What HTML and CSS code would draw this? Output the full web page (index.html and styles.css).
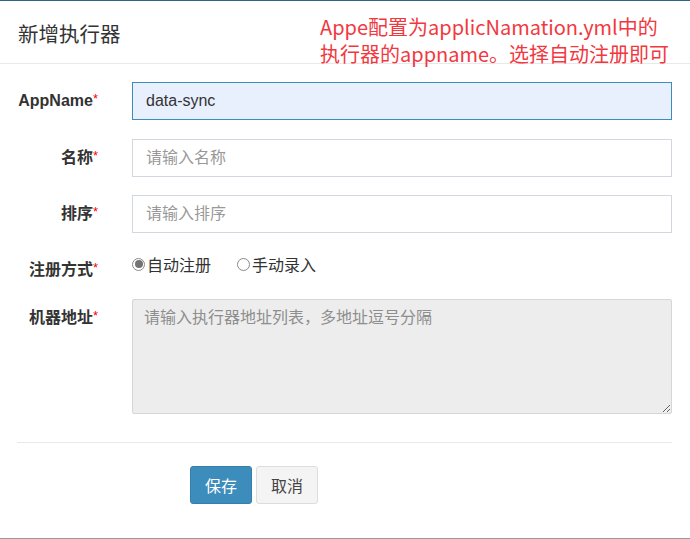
FILE: index.html
```html
<!DOCTYPE html>
<html lang="zh">
<head>
<meta charset="utf-8">
<title>新增执行器</title>
<link rel="stylesheet" href="styles.css">
</head>
<body>
<div class="modal">
  <div class="modal-header">
    <h4 class="modal-title">新增执行器</h4>
    <div class="note">Appe配置为applicNamation.yml中的<br>执行器的appname。选择自动注册即可</div>
  </div>
  <div class="modal-body">
    <div class="form-row first">
      <label class="form-label">AppName<span class="req">*</span></label>
      <input class="form-control focused" type="text" value="data-sync">
    </div>
    <div class="form-row">
      <label class="form-label">名称<span class="req">*</span></label>
      <input class="form-control" type="text" placeholder="请输入名称">
    </div>
    <div class="form-row">
      <label class="form-label">排序<span class="req">*</span></label>
      <input class="form-control" type="text" placeholder="请输入排序">
    </div>
    <div class="form-row radio-row">
      <label class="form-label">注册方式<span class="req">*</span></label>
      <div class="radio-group">
        <label class="radio"><input type="radio" name="mode" checked>自动注册</label>
        <label class="radio"><input type="radio" name="mode">手动录入</label>
      </div>
    </div>
    <div class="form-row">
      <label class="form-label">机器地址<span class="req">*</span></label>
      <textarea class="form-control area" placeholder="请输入执行器地址列表，多地址逗号分隔" readonly></textarea>
    </div>
    <div class="divider"></div>
    <div class="actions">
      <button class="btn btn-primary" type="button">保存</button>
      <button class="btn btn-default" type="button">取消</button>
    </div>
  </div>
</div>
</body>
</html>
```

FILE: styles.css
```css
* { box-sizing: border-box; }
html, body { margin: 0; padding: 0; background: #fff; }
body {
  font-family: "Liberation Sans", "Noto Sans CJK SC", sans-serif;
  color: #333;
  width: 690px;
  height: 539px;
  overflow: hidden;
}
.modal {
  position: relative;
  width: 690px;
  height: 539px;
  border-top: 1px solid #2b6689;
  border-bottom: 1px solid #9a9a9a;
}
.modal-header {
  position: relative;
  height: 63px;
  border-bottom: 1px solid #e9e9e9;
  padding: 0 18px;
  display: flex;
  align-items: center;
}
.modal-title {
  margin: 0;
  font-family: "Noto Sans CJK SC", sans-serif;
  font-size: 20.5px;
  font-weight: normal;
  line-height: 28px;
  color: #333;
  padding-top: 2px;
}
.note {
  position: absolute;
  left: 320px;
  top: 12px;
  font-family: "Noto Sans CJK SC", sans-serif;
  font-size: 20px;
  line-height: 27px;
  color: #f2383f;
  white-space: nowrap;
}
.modal-body {
  padding-top: 18px;
}
.form-row {
  display: flex;
  align-items: flex-start;
  margin-bottom: 18px;
}
.form-row.first { margin-bottom: 19px; }
.form-row.radio-row { margin-bottom: 17px; }
.form-label {
  width: 98px;
  height: 31px;
  flex: none;
  text-align: right;
  padding-top: 7px;
  line-height: 24px;
  font-size: 16px;
  font-weight: bold;
  color: #333;
  font-family: "Liberation Sans", "Noto Sans CJK SC", sans-serif;
}
.req {
  color: #f00;
  font-size: 13px;
  line-height: 0;
  font-weight: normal;
  vertical-align: 3px;
}
.form-control {
  margin-left: 34px;
  width: 540px;
  height: 38px;
  border: 1px solid #d2d6de;
  background: #fff;
  padding: 0 13px;
  font-family: "Liberation Sans", "Noto Sans CJK SC", sans-serif;
  font-size: 16px;
  color: #333;
  outline: none;
  border-radius: 0;
}
.form-control::placeholder { color: #999; }
.form-control.focused {
  border-color: #3c8dbc;
  background: #e8f0fe;
}
.area {
  height: 115px;
  padding: 6px 11px;
  line-height: 24px;
  background: #ededed;
  border-color: #d6d6d6;
  border-radius: 2px;
  resize: vertical;
}
.area::placeholder { color: #8e8e8e; }
.radio-group {
  margin-left: 34px;
  display: flex;
  gap: 26px;
  height: 26px;
  line-height: 26px;
  font-family: "Noto Sans CJK SC", sans-serif;
  font-size: 16px;
  color: #333;
}
.radio {
  display: flex;
  align-items: center;
}
.radio input {
  appearance: none;
  -webkit-appearance: none;
  width: 13px;
  height: 13px;
  margin: 0 2px 0 0;
  border: 1px solid #8a8a8a;
  border-radius: 50%;
  background: #fff;
  position: relative;
}
.radio input:checked::after {
  content: "";
  position: absolute;
  left: 1.5px;
  top: 1.5px;
  width: 8px;
  height: 8px;
  border-radius: 50%;
  background: #737373;
}
.divider {
  margin: 28px 18px 0 17px;
  height: 1px;
  background: #e9e9e9;
}
.actions {
  padding-left: 190px;
  margin-top: 23px;
  display: flex;
  gap: 4px;
}
.btn {
  width: 62px;
  height: 38px;
  border-radius: 3px;
  font-family: "Noto Sans CJK SC", sans-serif;
  font-size: 16px;
  padding: 0;
  cursor: pointer;
}
.btn-primary {
  background: #3c8dbc;
  border: 1px solid #367fa9;
  color: #fff;
}
.btn-default {
  background: #f4f4f4;
  border: 1px solid #ddd;
  color: #444;
}
```
